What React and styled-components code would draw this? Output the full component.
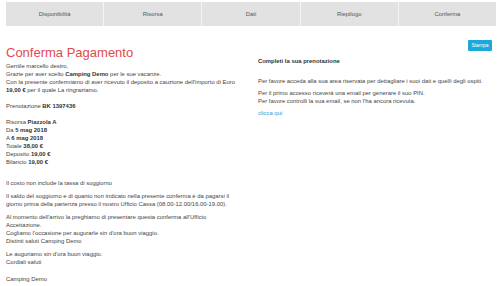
import React from "react";
import styled, { createGlobalStyle } from "styled-components";

const Global = createGlobalStyle`
  html, body { margin: 0; padding: 0; background: #fff; }
  body {
    font-family: "Liberation Sans", Arial, Helvetica, sans-serif;
    font-size: 5.9px;
    line-height: 8px;
    color: #444;
  }
  p { margin: 0; }
`;

const Page = styled.div`
  padding: 2px 4px 0 6px;
  width: 500px;
  box-sizing: border-box;
`;

const Steps = styled.nav`
  display: grid;
  grid-template-columns: repeat(5, 1fr);
  gap: 1px;
  background: #f4f4f4;
  height: 24px;
`;

const Step = styled.div`
  background: #e2e2e2;
  display: flex;
  align-items: center;
  justify-content: center;
  color: #555;
  font-size: 5.9px;
`;

const Main = styled.div`
  display: grid;
  grid-template-columns: 238px 240px;
  column-gap: 12px;
`;

const Column = styled.section`
  display: flex;
  flex-direction: column;
`;

const Title = styled.h1`
  margin: 20px 0 2px;
  font-size: 13px;
  line-height: 14px;
  font-weight: 400;
  color: #e04a4c;
`;

const Para = styled.p`
  && { margin-top: ${(p) => p.$gap ?? 4}px; }
`;

const Toolbar = styled.div`
  display: flex;
  justify-content: flex-end;
  padding: 14px 4px 0 0;
`;

const Button = styled.button`
  width: 24px;
  height: 11px;
  padding: 0;
  border: 0;
  border-radius: 1px;
  background: #1ba8da;
  color: #fff;
  font-family: inherit;
  font-size: 5px;
  line-height: 11px;
`;

const Subtitle = styled.h4`
  margin: 6px 0 0 2px;
  font-size: 5.9px;
  line-height: 8px;
  font-weight: 700;
  color: #333;
`;

const Body = styled.div`
  padding-left: 2px;
`;

const Link = styled.a`
  color: #2aa3d5;
  text-decoration: none;
`;

const B = styled.b`
  color: #333;
`;

export default function App() {
  const steps = ["Disponibilità", "Risorsa", "Dati", "Riepilogo", "Conferma"];
  return (
    <>
      <Global />
      <Page>
        <Steps>
          {steps.map((s) => (
            <Step key={s}>{s}</Step>
          ))}
        </Steps>
        <Main>
          <Column>
            <Title>Conferma Pagamento</Title>
            <Para $gap={0}>
              Gentile marcello destro,
              <br />
              Grazie per aver scelto <B>Camping Demo</B> per le sue vacanze.
              <br />
              Con la presente confermiamo di aver ricevuto il deposito a cauzione dell'importo di Euro{" "}
              <B>19,00 €</B> per il quale La ringraziamo.
            </Para>
            <Para $gap={8}>
              Prenotazione <B>BK 1397436</B>
            </Para>
            <Para $gap={8}>
              Risorsa <B>Piazzola A</B>
              <br />
              Da <B>5 mag 2018</B>
              <br />
              A <B>6 mag 2018</B>
              <br />
              Totale <B>38,00 €</B>
              <br />
              Deposito <B>19,00 €</B>
              <br />
              Bilancio <B>19,00 €</B>
            </Para>
            <Para $gap={13}>Il costo non include la tassa di soggiorno</Para>
            <Para $gap={5}>
              Il saldo del soggiorno e di quanto non indicato nella presente conferma è da pagarsi il giorno prima
              della partenza presso il nostro Ufficio Cassa (08.00-12.00/16.00-19.00).
            </Para>
            <Para $gap={5}>
              Al momento dell'arrivo la preghiamo di presentare questa conferma all'Ufficio
              <br />
              Accettazione.
              <br />
              Cogliamo l'occasione per augurarle sin d'ora buon viaggio.
              <br />
              Distinti saluti Camping Demo
            </Para>
            <Para $gap={5}>
              Le auguriamo sin d'ora buon viaggio.
              <br />
              Cordiali saluti
            </Para>
            <Para $gap={9}>Camping Demo</Para>
          </Column>
          <Column>
            <Toolbar>
              <Button>Stampa</Button>
            </Toolbar>
            <Subtitle>Completi la sua prenotazione</Subtitle>
            <Body>
              <Para $gap={12}>
                Per favore acceda alla sua area riservata per dettagliare i suoi dati e quelli degli ospiti.
              </Para>
              <Para $gap={4}>
                Per il primo accesso riceverà una email per generare il suo PIN.
                <br />
                Per favore controlli la sua email, se non l'ha ancora ricevuta.
              </Para>
              <Para $gap={4}>
                <Link href="#">clicca qui</Link>
              </Para>
            </Body>
          </Column>
        </Main>
      </Page>
    </>
  );
}
